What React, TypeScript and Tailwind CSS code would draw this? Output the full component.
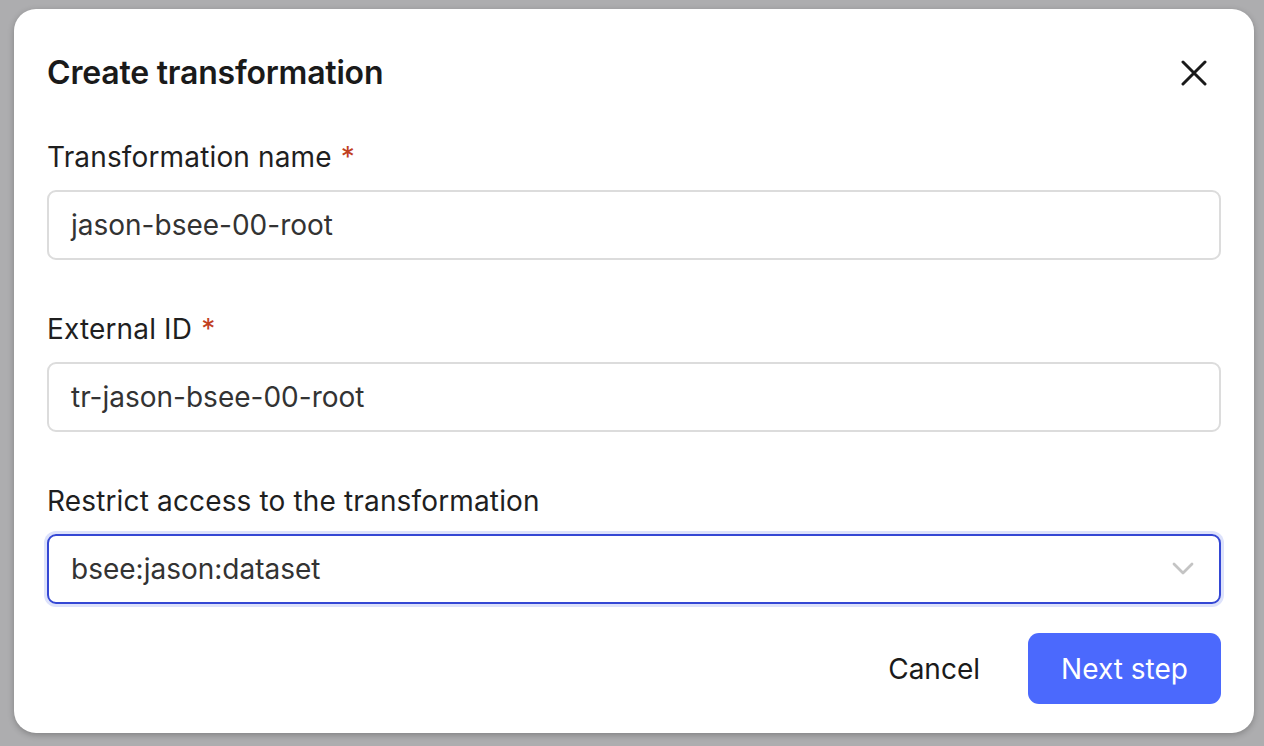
import React from "react";

function Label({ text, required }: { text: string; required?: boolean }) {
  return (
    <div className="text-[28px] leading-[34px] text-[#1f1f1f] mb-[16px] tracking-[0.15px]">
      {text}
      {required && <span className="text-[#c1401f] ml-[9px]">*</span>}
    </div>
  );
}

export default function App() {
  return (
    <div
      className="w-[1264px] h-[746px] bg-[#adadaf] pt-[9px] pl-[14px]"
      style={{ fontFamily: "Inter, 'Noto Sans', sans-serif" }}
    >
      <div className="w-[1240px] h-[724px] bg-white rounded-[22px] shadow-[0_2px_6px_rgba(0,0,0,0.25)] px-[33px] pt-[44px] flex flex-col">
        <div className="flex items-center justify-between h-[40px]">
          <div className="text-[32px] leading-[40px] font-semibold text-[#1a1a1a] tracking-[-0.2px]">Create transformation</div>
          <svg width="26" height="26" viewBox="0 0 26 26" className="mr-[14px]" fill="none" stroke="#1a1a1a" strokeWidth="3" strokeLinecap="round">
            <path d="M2 2L24 24M24 2L2 24" />
          </svg>
        </div>
        <div className="mt-[47px]">
          <Label text="Transformation name" required />
          <div className="h-[70px] border-2 border-[#dcdcdc] rounded-[9px] flex items-center px-[22px] text-[28px] text-[#333]">
            jason-bsee-00-root
          </div>
        </div>
        <div className="mt-[52px]">
          <Label text="External ID" required />
          <div className="h-[70px] border-2 border-[#dcdcdc] rounded-[9px] flex items-center px-[22px] text-[28px] text-[#333]">
            tr-jason-bsee-00-root
          </div>
        </div>
        <div className="mt-[52px]">
          <Label text="Restrict access to the transformation" />
          <div className="h-[70px] border-2 border-[#3447d4] rounded-[9px] flex items-center justify-between pl-[22px] pr-[25px] text-[28px] text-[#333] shadow-[0_0_0_3px_#dde2fb]">
            <span>bsee:jason:dataset</span>
            <svg width="22" height="14" viewBox="0 0 22 14" fill="none" stroke="#c4c4c4" strokeWidth="2.8" strokeLinecap="round" strokeLinejoin="round">
              <path d="M2 2L11 11L20 2" />
            </svg>
          </div>
        </div>
        <div className="mt-[29px] flex items-center justify-end">
          <button className="text-[28px] text-[#1a1a1a] mr-[48px]">Cancel</button>
          <button className="h-[71px] w-[193px] rounded-[11px] bg-[#4b69fd] text-white text-[28px]">Next step</button>
        </div>
      </div>
    </div>
  );
}
